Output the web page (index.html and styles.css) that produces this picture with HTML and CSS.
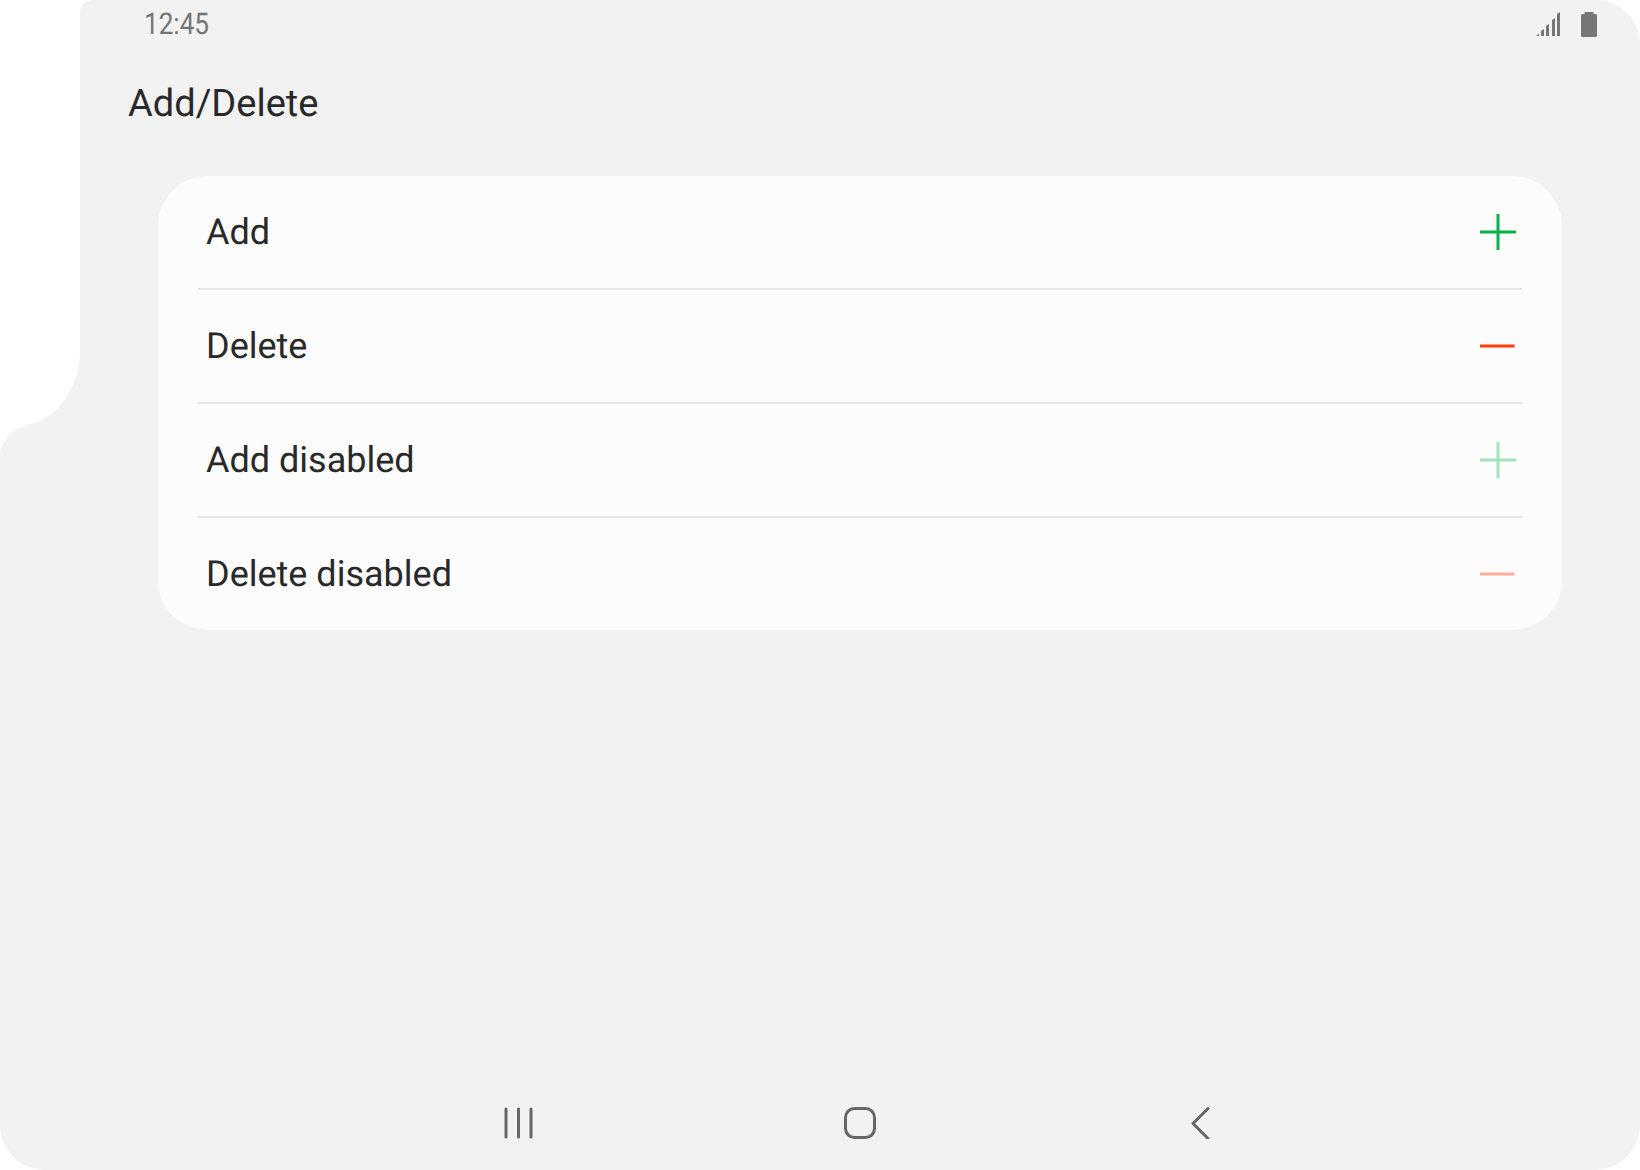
FILE: index.html
```html
<!DOCTYPE html>
<html lang="en">
<head>
<meta charset="utf-8">
<title>Add/Delete</title>
<link rel="stylesheet" href="styles.css">
</head>
<body>
<main class="screen">
  <header class="status">
    <span class="time">12:45</span>
    <div class="status-icons">
      <svg class="signal" width="24" height="25" viewBox="0 0 24 25"><path d="M0 24h3v-2.400zM5 24h3V17l-3 2zM10 24h3V12l-3 2zM16 24h3V6l-3 2zM21 24h3V0l-3 2z"/></svg>
      <svg class="battery" width="16" height="25" viewBox="0 0 16 25"><path d="M5 0h6a1 1 0 0 1 1 2h2.500a1.500 1.500 0 0 1 1.500 1.500V23.500a1.500 1.500 0 0 1-1.500 1.500H1.500A1.500 1.500 0 0 1 0 23.500V3.500A1.500 1.500 0 0 1 1.500 2H4a1 1 0 0 1 1-2z"/></svg>
    </div>
  </header>
  <h1 class="title">Add/Delete</h1>
  <section class="card">
    <div class="row">
      <span class="label">Add</span>
      <svg class="icon add" width="36" height="36" viewBox="0 0 36 36"><path d="M0 18h36M18 0v36"/></svg>
    </div>
    <div class="row">
      <span class="label">Delete</span>
      <svg class="icon del" width="36" height="36" viewBox="0 0 36 36"><path d="M0 18h34.500"/></svg>
    </div>
    <div class="row">
      <span class="label">Add disabled</span>
      <svg class="icon add off" width="36" height="36" viewBox="0 0 36 36"><path d="M0 18h36M18 0v36"/></svg>
    </div>
    <div class="row">
      <span class="label">Delete disabled</span>
      <svg class="icon del off" width="36" height="36" viewBox="0 0 36 36"><path d="M0 18h34.500"/></svg>
    </div>
  </section>
  <nav class="navbar">
    <svg class="nav-icon" width="32" height="32" viewBox="0 0 32 32"><path d="M3 2v28M15.500 2v28M28 2v28"/></svg>
    <svg class="nav-icon" width="32" height="32" viewBox="0 0 32 32"><rect x="1.500" y="1.500" width="29" height="29" rx="9"/></svg>
    <svg class="nav-icon" width="32" height="32" viewBox="0 0 32 32"><path d="M23 1.500L8 16.500l15 15"/></svg>
  </nav>
</main>
</body>
</html>
```
FILE: styles.css
```css
* { box-sizing: border-box; }
html, body { margin: 0; background: #fff; }
.screen {
  width: 1640px;
  height: 1170px;
  background: #f2f2f2;
  color: #292929;
  font-family: Roboto, "Liberation Sans", sans-serif;
  text-rendering: geometricPrecision;
  display: flex;
  flex-direction: column;
  overflow: hidden;
  clip-path: path("M92 0H1595A45 45 0 0 1 1640 45V1125A45 45 0 0 1 1595 1170H45A45 45 0 0 1 0 1125V458C0 442 12 428 30 424C60 417 80 385 80 350V12A12 12 0 0 1 92 0Z");
}
.status {
  height: 48px;
  padding: 0 43px 0 144px;
  display: flex;
  justify-content: space-between;
  align-items: flex-start;
  flex: none;
}
.time {
  display: inline-block;
  font-size: 30px;
  line-height: 50px;
  color: #767676;
  transform: scaleX(0.87);
  transform-origin: left center;
}
.status-icons {
  display: flex;
  align-items: flex-start;
  gap: 21px;
  padding-top: 12px;
  fill: #767676;
}
.title {
  margin: 31px 0 0 128px;
  font-size: 38px;
  line-height: 50px;
  font-weight: 400;
  flex: none;
}
.card {
  margin: 47px 78px 0 158px;
  height: 454px;
  background: #fcfcfc;
  border-radius: 50px;
  padding: 0 40px;
  flex: none;
}
.row {
  height: 114px;
  padding: 0 6px 0 8px;
  display: flex;
  align-items: center;
  justify-content: space-between;
  border-bottom: 2px solid #e6e6e6;
}
.row:last-child { height: 112px; border-bottom: 0; }
.label { font-size: 36px; }
.icon { fill: none; stroke-width: 3; stroke-linecap: butt; }
.add { stroke: #0ab14b; }
.del { stroke: #ff3c0a; }
.add.off { stroke: #a4e2bc; }
.del.off { stroke: #ffad9c; }
.navbar {
  margin-top: auto;
  margin-bottom: 31px;
  padding-left: 503px;
  display: flex;
  gap: 309px;
  flex: none;
}
.nav-icon { fill: none; stroke: #666; stroke-width: 3; stroke-linecap: round; stroke-linejoin: round; }
```
